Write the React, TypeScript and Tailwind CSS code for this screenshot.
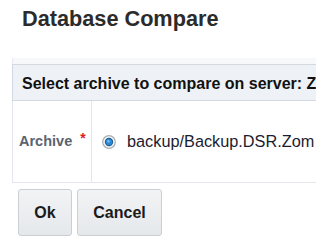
import React from 'react';

// Radio button drawn to match the skin's blue "selected" bullet
function RadioOn() {
  return (
    <svg width="14" height="14" viewBox="0 0 14 14" className="shrink-0">
      <circle cx="7" cy="7" r="6.3" fill="#f4f5f6" stroke="#a9aeb3" strokeWidth="1.2" />
      <circle cx="7" cy="7" r="4.2" fill="#1f5f93" />
      <circle cx="7" cy="7" r="3.1" fill="#2b8ad8" />
      <circle cx="6.4" cy="6.3" r="1.2" fill="#7cc0f2" />
    </svg>
  );
}

export default function App() {
  return (
    <div className="h-[244px] w-[328px] overflow-hidden bg-white font-['Liberation_Sans',Arial,sans-serif]">
      <div className="w-[316px] overflow-hidden">
        {/* Dialog title */}
        <div className="h-[58px] pl-[22px] pt-[8px]">
          <h1 className="text-[21.7px] font-bold leading-[22px] text-[#2b2b2b]">Database Compare</h1>
        </div>

        {/* Form table */}
        <div className="ml-[12px] w-[420px]">
          <div className="h-[6px] border-l border-[#e6e9ed] bg-[#f7f8fa]" />
          <div className="flex h-[37px] items-center border-y border-l border-[#d3d9e0] bg-[#eef1f5] pl-[9px] pt-[3px]">
            <span className="whitespace-nowrap text-[16px] font-bold leading-[20px] text-[#111]">
              Select archive to compare on server: Z
            </span>
          </div>
          <div className="flex h-[82px] border-b border-l border-[#e3e6ea]">
            <div className="flex w-[79px] shrink-0 items-start border-r border-[#e3e6ea] pl-[6px] pt-[30px]">
              <span className="text-[14.5px] font-bold leading-[20px] text-[#5a6470]">Archive</span>
              <span className="ml-[8px] mt-[-1px] text-[14px] font-bold leading-[16px] text-[#e0201f]">*</span>
            </div>
            <div className="flex items-start pl-[10px] pt-[30px]">
              <div className="mt-[4px]">
                <RadioOn />
              </div>
              <span className="ml-[11px] whitespace-nowrap text-[16.3px] leading-[20px] text-[#1c1c30]">
                backup/Backup.DSR.Zom
              </span>
            </div>
          </div>
        </div>

        {/* Actions */}
        <div className="ml-[18px] mt-[6px] flex gap-[5px]">
          <button className="h-[47px] w-[54px] rounded-[3px] border border-[#c9cfd6] bg-gradient-to-b from-[#f2f3f5] to-[#e5e8eb] text-[16px] font-bold text-[#1a1a1a]">
            Ok
          </button>
          <button className="h-[47px] w-[85px] rounded-[3px] border border-[#c9cfd6] bg-gradient-to-b from-[#f2f3f5] to-[#e5e8eb] text-[16px] font-bold text-[#1a1a1a]">
            Cancel
          </button>
        </div>
      </div>
    </div>
  );
}
